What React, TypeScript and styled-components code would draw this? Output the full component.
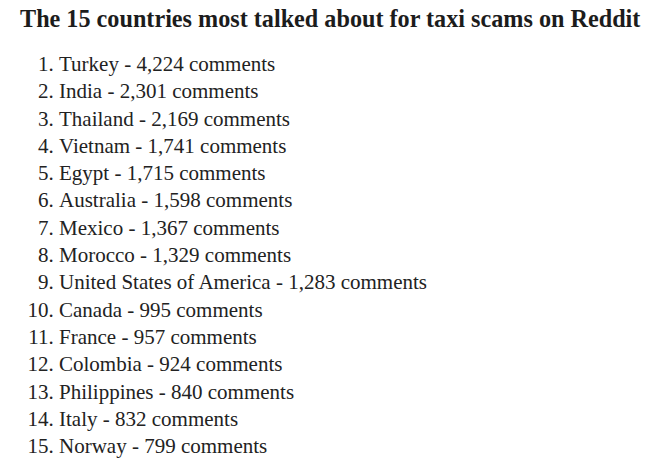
import styled, { createGlobalStyle } from 'styled-components';

const GlobalStyle = createGlobalStyle`
  html, body {
    margin: 0;
    padding: 0;
    background: #ffffff;
  }
`;

const Page = styled.div`
  width: 652px;
  height: 470px;
  box-sizing: border-box;
  padding: 4px 0 0 20px;
  font-family: 'Liberation Serif', 'Times New Roman', serif;
  color: #222222;
  background: #ffffff;
  overflow: hidden;
`;

const Title = styled.h2`
  margin: 0;
  font-size: 24.2px;
  line-height: 30px;
  font-weight: 700;
  color: #1c1c1c;
  white-space: nowrap;
`;

const List = styled.ol`
  margin: 17px 0 0;
  padding-left: 39px;
  list-style: decimal;
`;

const Item = styled.li`
  font-size: 21px;
  line-height: 27.3px;
`;

const countries: [string, string][] = [
  ['Turkey', '4,224'],
  ['India', '2,301'],
  ['Thailand', '2,169'],
  ['Vietnam', '1,741'],
  ['Egypt', '1,715'],
  ['Australia', '1,598'],
  ['Mexico', '1,367'],
  ['Morocco', '1,329'],
  ['United States of America', '1,283'],
  ['Canada', '995'],
  ['France', '957'],
  ['Colombia', '924'],
  ['Philippines', '840'],
  ['Italy', '832'],
  ['Norway', '799'],
];

export default function App() {
  return (
    <>
      <GlobalStyle />
      <Page>
        <Title>The 15 countries most talked about for taxi scams on Reddit</Title>
        <List>
          {countries.map(([name, count]) => (
            <Item key={name}>
              {name} - {count} comments
            </Item>
          ))}
        </List>
      </Page>
    </>
  );
}
